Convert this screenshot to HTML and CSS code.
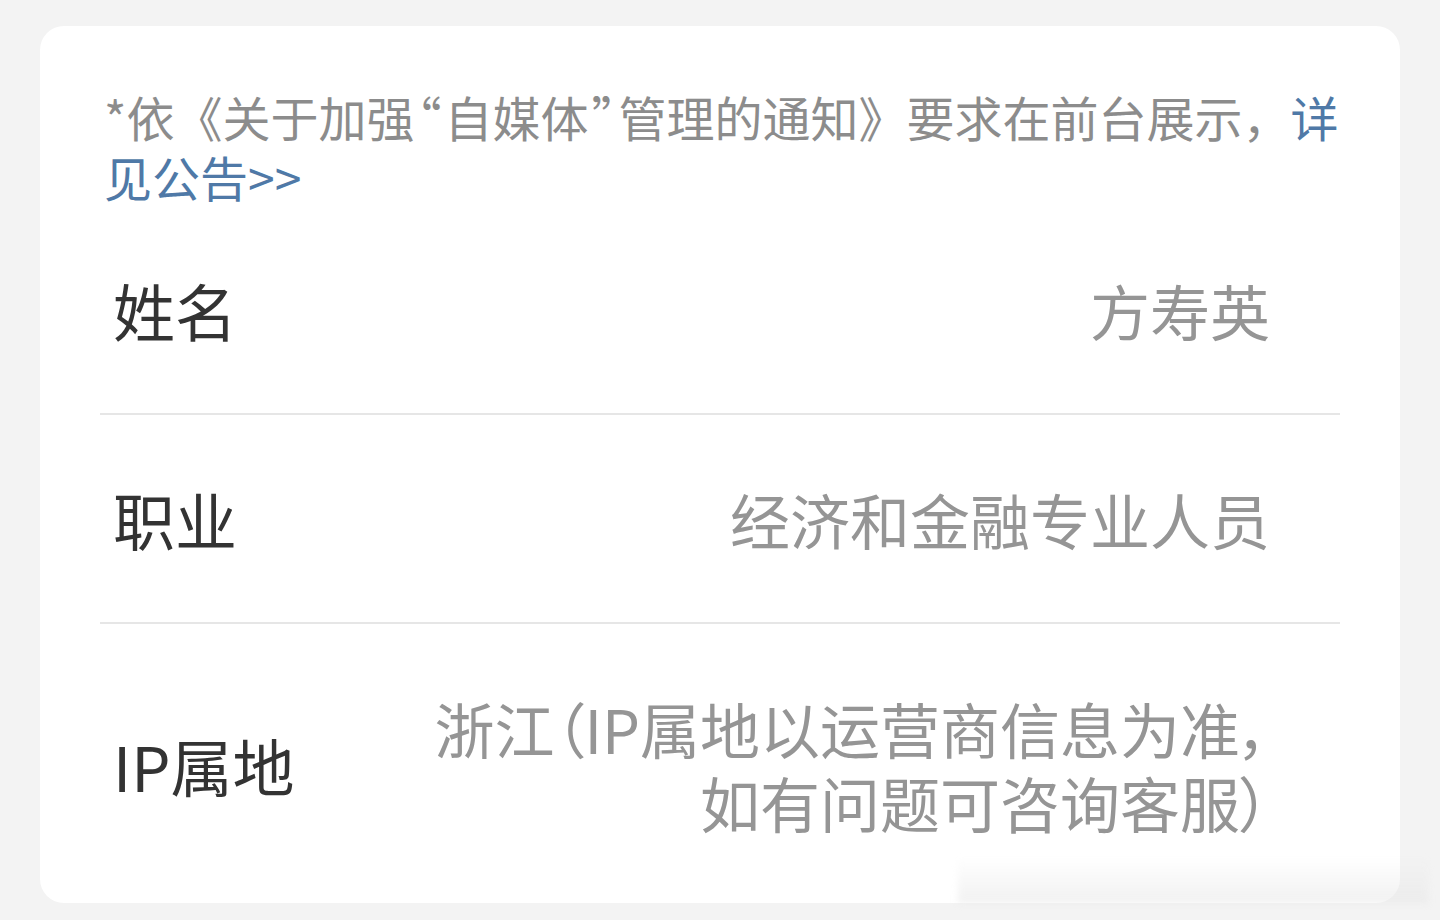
FILE: index.html
```html
<!DOCTYPE html>
<html lang="zh-CN">
<head>
    <meta charset="UTF-8">
    <meta name="viewport" content="width=device-width, initial-scale=1.0">
    <title>个人信息</title>
    <link rel="stylesheet" href="styles.css">
</head>
<body>
    <div class="card">
        <p class="notice">*依《关于加强<span class="quote">“</span>自媒体<span class="quote">”</span>管理的通知》要求在前台展示，<a href="#" class="notice-link">详见公告&gt;&gt;</a></p>

        <div class="row">
            <span class="label">姓名</span>
            <span class="value">方寿英</span>
        </div>
        <div class="row">
            <span class="label">职业</span>
            <span class="value">经济和金融专业人员</span>
        </div>
        <div class="row row-tall">
            <span class="label">IP属地</span>
            <span class="value value-multi">浙江（IP属地以运营商信息为准，<br>如有问题可咨询客服）</span>
        </div>

        <div class="watermark"></div>
    </div>
</body>
</html>
```

FILE: styles.css
```css
body {
    margin: 0;
    padding: 26px 40px 17px;
    background-color: #f3f3f3;
    font-family: "Noto Sans CJK SC", "Noto Sans", sans-serif;
}
.card {
    position: relative;
    height: 877px;
    box-sizing: border-box;
    padding: 0 60px;
    background-color: #fff;
    border-radius: 24px;
}
.notice {
    margin: 0;
    padding: 60px 0 0 4px;
    font-size: 48px;
    line-height: 60px;
    color: #8c8c8c;
}
.quote {
    font-feature-settings: "halt";
    margin: 0 3px;
}
.notice-link {
    color: #4f79a7;
    text-decoration: none;
}
.row {
    display: flex;
    justify-content: space-between;
    align-items: center;
    min-height: 207px;
    padding: 0 70px 0 13px;
    border-bottom: 2px solid #e6e6e6;
}
.row-tall {
    min-height: 0;
    padding-top: 67px;
    padding-bottom: 60px;
    border-bottom: none;
}
.label {
    font-size: 62px;
    line-height: 74px;
    color: #333;
}
.value {
    font-size: 60px;
    line-height: 74px;
    color: #959595;
    text-align: right;
}
.value-multi {
    font-feature-settings: "palt";
}
.watermark {
    position: absolute;
    right: -28px;
    bottom: 0;
    width: 470px;
    height: 46px;
    background: linear-gradient(to bottom, rgba(235, 235, 235, 0), rgba(232, 232, 232, 0.6));
    filter: blur(3px);
}
```
